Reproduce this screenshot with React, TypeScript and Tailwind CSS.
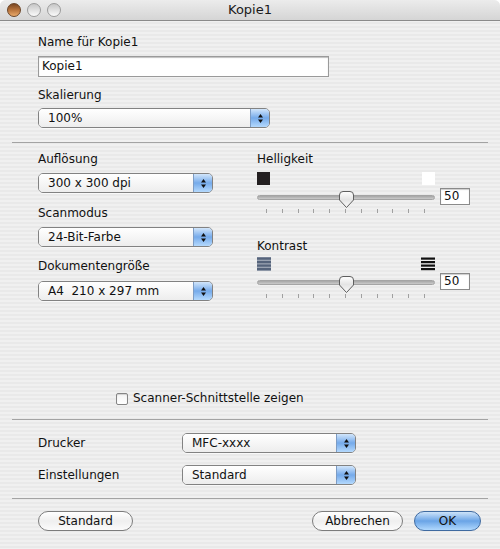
import React from 'react';

const font = "font-['DejaVu_Sans',sans-serif]";

const Stepper = () => (
  <div className="flex h-full w-[19px] items-center justify-center border-l border-[#7d9cc4] bg-gradient-to-b from-[#d2e6fb] via-[#75aaea] to-[#b4d9fd]">
    <svg width="7" height="11" viewBox="0 0 7 11">
      <path d="M3.5 1 L6 4.5 L1 4.5 Z" fill="#111" />
      <path d="M1 6.5 L6 6.5 L3.5 10 Z" fill="#111" />
    </svg>
  </div>
);

const Popup = ({ text, w }: { text: string; w: string }) => (
  <div className={`flex h-[20px] ${w} overflow-hidden rounded-[5px] border border-[#828282] shadow-[0_1px_0_rgba(255,255,255,0.6)]`}>
    <div className="flex flex-1 items-center whitespace-pre bg-gradient-to-b from-white via-[#f6f6f6] to-[#ededed] pl-[9px] text-[12px] leading-[15px] text-[#111]">
      {text}
    </div>
    <Stepper />
  </div>
);

const Label = ({ children, className = '' }: { children: React.ReactNode; className?: string }) => (
  <div className={`text-[12px] leading-[15px] text-[#111] ${className}`}>{children}</div>
);

const Separator = ({ className = '' }: { className?: string }) => (
  <div className={`h-px bg-[#a3a3a3] ${className}`} />
);

const Thumb = () => (
  <svg width="17" height="19" viewBox="0 0 17 19" className="absolute left-[81px] top-[2px]">
    <defs>
      <linearGradient id="th" x1="0" y1="0" x2="0" y2="1">
        <stop offset="0" stopColor="#ffffff" />
        <stop offset="0.5" stopColor="#e4e4e4" />
        <stop offset="1" stopColor="#fafafa" />
      </linearGradient>
    </defs>
    <path d="M1.5 5 Q1.5 1.5 5 1.5 L12 1.5 Q15.5 1.5 15.5 5 L15.5 10 L8.5 17.5 L1.5 10 Z" fill="url(#th)" stroke="#5e5e5e" strokeWidth="1" />
  </svg>
);

const Slider = ({ className = '' }: { className?: string }) => (
  <div className={`flex flex-col ${className}`}>
    <div className="flex items-start gap-[5px]">
      <div className="relative h-[20px] w-[178px]">
        <div className="mt-[7px] h-[5px] rounded-full border border-[#a4a4a4] bg-gradient-to-b from-[#a6a6a6] to-[#cacaca]" />
        <Thumb />
      </div>
      <div className="flex h-[17px] w-[30px] items-center border border-[#8a8a8a] bg-white pl-[3px] text-[12px] leading-[15px] text-[#111] shadow-[inset_0_1px_1px_rgba(0,0,0,0.2)]">
        50
      </div>
    </div>
    <div className="mt-[1px] flex h-[4px] w-[178px] justify-between pl-[9px] pr-[10px]">
      {Array.from({ length: 11 }).map((_, i) => (
        <div key={i} className="h-[4px] w-px bg-[#a0a0a0]" />
      ))}
    </div>
  </div>
);

const PushButton = ({ children, w, primary = false }: { children: React.ReactNode; w: string; primary?: boolean }) => (
  <div
    className={`flex h-[20px] ${w} items-center justify-center rounded-full border text-[12px] leading-[15px] text-[#111] ${
      primary
        ? 'border-[#3f6aa0] bg-gradient-to-b from-[#cde3f9] via-[#6aa4e6] to-[#b0d8fd]'
        : 'border-[#7c7c7c] bg-gradient-to-b from-white via-[#efefef] to-[#fbfbfb]'
    }`}
  >
    {children}
  </div>
);

export default function App() {
  return (
    <div className={`h-[549px] w-[500px] overflow-hidden rounded-t-[6px] ${font} bg-[image:repeating-linear-gradient(to_bottom,#f0f0f0_0px,#f0f0f0_2px,#e9e9e9_2px,#e9e9e9_4px)]`}>
      {/* title bar */}
      <div className="grid h-[21px] grid-cols-[1fr_auto_1fr] items-center border-b border-[#8a8a8a] bg-gradient-to-b from-[#ececec] to-[#d5d5d5]">
        <div className="flex items-center gap-[6px] pl-[7px]">
          <div className="h-[14px] w-[14px] rounded-full border border-[#6b4426] bg-gradient-to-b from-[#7a4723] via-[#b8743c] to-[#eaaa6a]" />
          <div className="h-[14px] w-[14px] rounded-full border border-[#9b9b9b] bg-gradient-to-b from-[#c6c6c6] to-[#fbfbfb]" />
          <div className="h-[14px] w-[14px] rounded-full border border-[#9b9b9b] bg-gradient-to-b from-[#c6c6c6] to-[#fbfbfb]" />
        </div>
        <div className="text-[13px] leading-[16px] text-[#1a1a1a]">Kopie1</div>
        <div />
      </div>

      <div className="flex flex-col px-[12px]">
        {/* name + scaling */}
        <div className="flex flex-col px-[26px]">
          <Label className="mt-[14px]">Name für Kopie1</Label>
          <div className="mt-[6px] flex h-[21px] w-[291px] items-center border border-[#9a9a9a] bg-white pl-[3px] text-[12px] leading-[15px] text-[#111] shadow-[inset_0_1px_1px_rgba(0,0,0,0.25)]">
            Kopie1
          </div>
          <Label className="mt-[11px]">Skalierung</Label>
          <div className="mt-[5px]">
            <Popup text="100%" w="w-[232px]" />
          </div>
        </div>

        <Separator className="mt-[14px]" />

        {/* scan settings */}
        <div className="flex">
          <div className="ml-[26px] flex w-[175px] flex-col">
            <Label className="mt-[9px]">Auflösung</Label>
            <div className="mt-[6px]"><Popup text="300 x 300 dpi" w="w-[175px]" /></div>
            <Label className="mt-[13px]">Scanmodus</Label>
            <div className="mt-[6px]"><Popup text="24-Bit-Farbe" w="w-[175px]" /></div>
            <Label className="mt-[12px]">Dokumentengröße</Label>
            <div className="mt-[7px]"><Popup text="A4  210 x 297 mm" w="w-[175px]" /></div>
          </div>

          <div className="ml-[44px] flex w-[213px] flex-col">
            <Label className="mt-[9px]">Helligkeit</Label>
            <div className="mt-[5px] flex w-[178px] justify-between">
              <div className="h-[13px] w-[13px] bg-[#231f20]" />
              <div className="h-[13px] w-[13px] bg-white" />
            </div>
            <Slider className="mt-[3px]" />
            <Label className="mt-[26px]">Kontrast</Label>
            <div className="mt-[3px] flex w-[178px] justify-between">
              <svg width="14" height="14" viewBox="0 0 14 14">
                <rect x="0" y="0" width="14" height="14" fill="#9aa3b2" />
                <rect x="0" y="0.5" width="14" height="2.2" fill="#55637b" />
                <rect x="0" y="4" width="14" height="2.2" fill="#55637b" />
                <rect x="0" y="7.5" width="14" height="2.2" fill="#55637b" />
                <rect x="0" y="11" width="14" height="2.2" fill="#55637b" />
              </svg>
              <svg width="14" height="14" viewBox="0 0 14 14">
                <rect x="0" y="0.5" width="14" height="2.2" fill="#111" />
                <rect x="0" y="4" width="14" height="2.2" fill="#111" />
                <rect x="0" y="7.5" width="14" height="2.2" fill="#111" />
                <rect x="0" y="11" width="14" height="2.2" fill="#111" />
              </svg>
            </div>
            <Slider className="mt-[2px]" />
          </div>
        </div>

        {/* checkbox */}
        <div className="ml-[104px] mt-[90px] flex h-[15px] items-center gap-[5px]">
          <div className="h-[12px] w-[12px] rounded-[2px] border border-[#858585] bg-gradient-to-b from-[#f4f4f4] to-white shadow-[inset_0_1px_1px_rgba(0,0,0,0.15)]" />
          <span className="text-[12px] leading-[15px] text-[#111]">Scanner-Schnittstelle zeigen</span>
        </div>

        <Separator className="mt-[13px]" />

        {/* printer */}
        <div className="mt-[13px] flex items-center pl-[26px]">
          <Label className="w-[144px]">Drucker</Label>
          <Popup text="MFC-xxxx" w="w-[174px]" />
        </div>
        <div className="mt-[12px] flex items-center pl-[26px]">
          <Label className="w-[144px]">Einstellungen</Label>
          <Popup text="Standard" w="w-[174px]" />
        </div>

        <Separator className="mt-[13px]" />

        {/* buttons */}
        <div className="mt-[12px] flex items-center justify-between pl-[26px] pr-[7px]">
          <PushButton w="w-[95px]">Standard</PushButton>
          <div className="flex gap-[11px]">
            <PushButton w="w-[91px]">Abbrechen</PushButton>
            <PushButton w="w-[67px]" primary>OK</PushButton>
          </div>
        </div>
      </div>
    </div>
  );
}
